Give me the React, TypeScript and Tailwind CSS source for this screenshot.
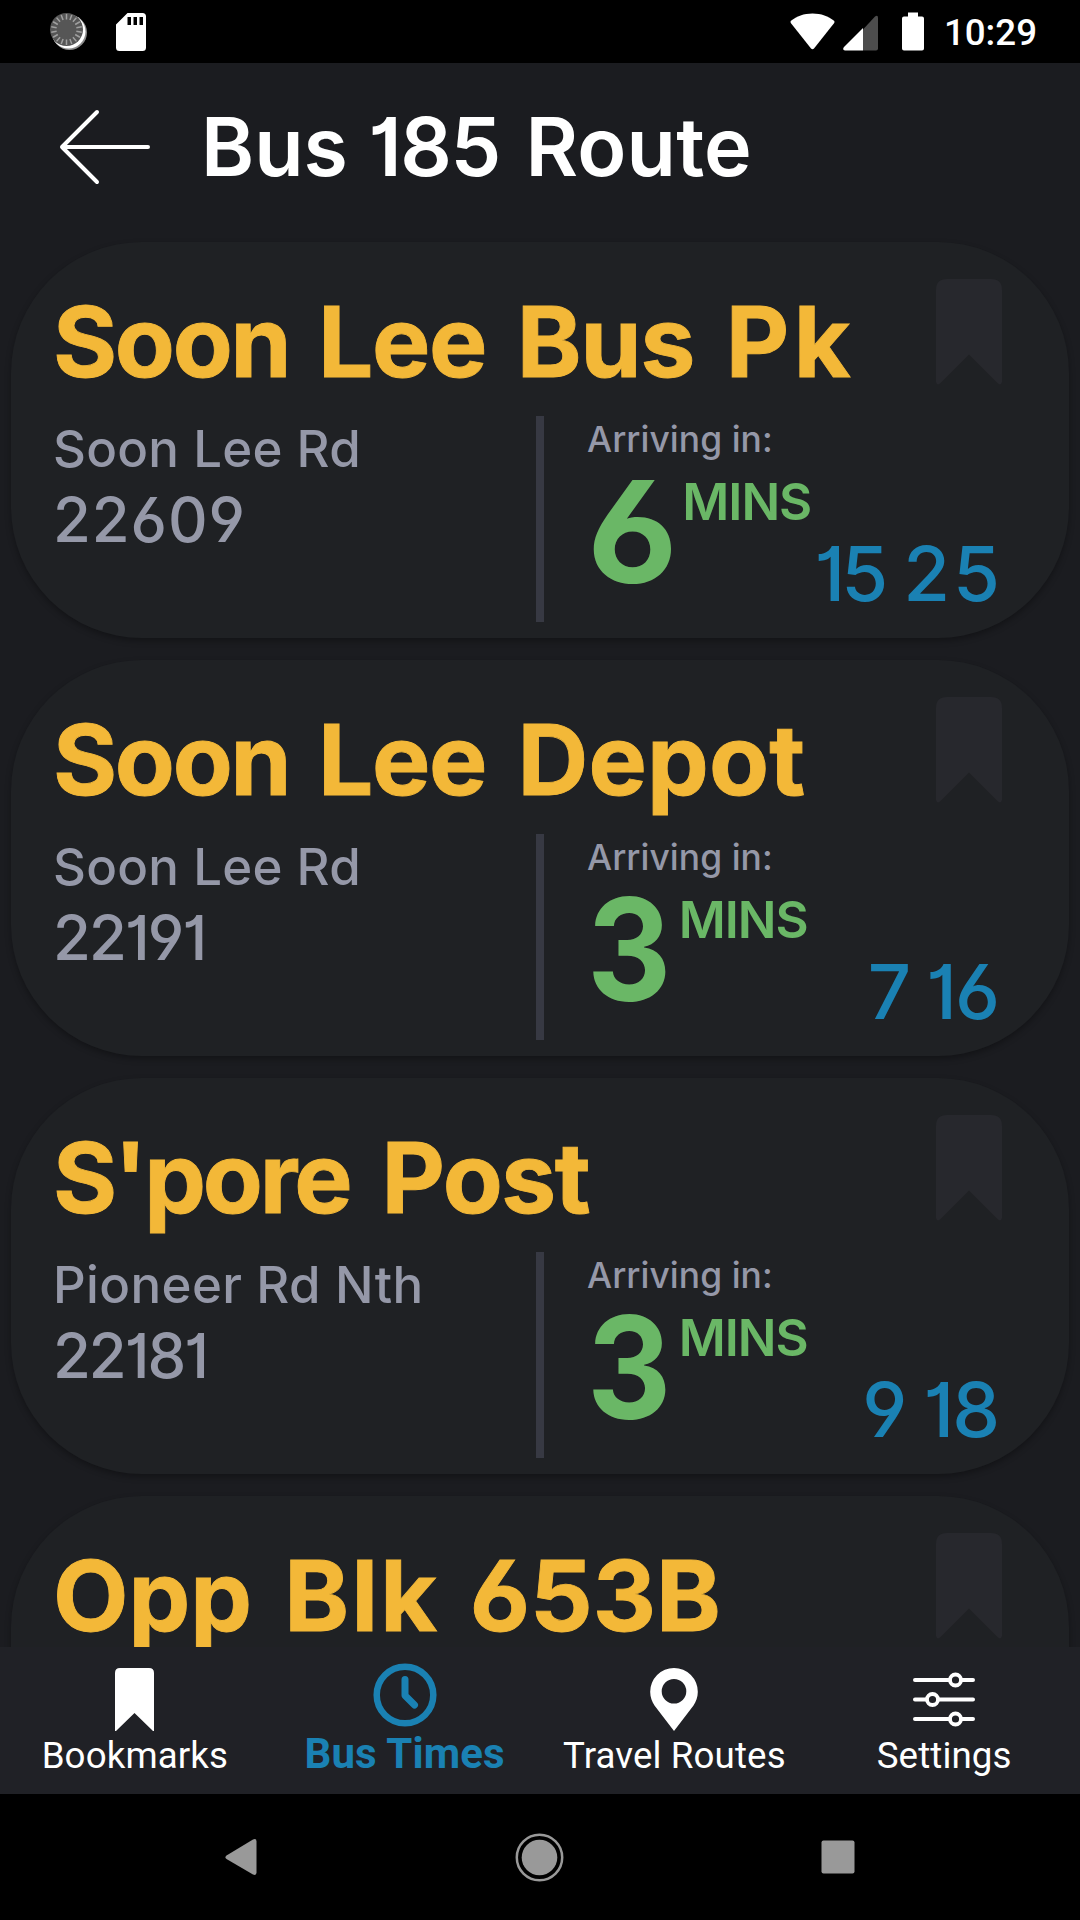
import type { ReactNode } from "react";

type Word = { text: string; className: string };

type Stop = {
  name: Word[];
  road: string;
  roadClass: string;
  code: string;
  codeClass: string;
  first: string;
  firstClass: string;
  laterClass: string;
  later: Word[];
};

const stops: Stop[] = [
  {
    name: [
      { text: "Soon", className: "tracking-[-2.3px]" },
      { text: "Lee", className: "ml-[7px] tracking-[-1.4px]" },
      { text: "Bus", className: "ml-[8.5px] tracking-[-1px]" },
      { text: "Pk", className: "ml-[3.5px] tracking-[4.5px]" },
    ],
    road: "Soon Lee Rd",
    roadClass: "tracking-[0.27px]",
    code: "22609",
    codeClass: "tracking-[0.9px]",
    first: "6",
    firstClass: "scale-x-[1.04]",
    laterClass: "gap-[19px]",
    later: [
      { text: "15", className: "tracking-[-4px]" },
      { text: "25", className: "-mr-[3px] tracking-[3px]" },
    ],
  },
  {
    name: [
      { text: "Soon", className: "tracking-[-2.3px]" },
      { text: "Lee", className: "ml-[7px] tracking-[-1.4px]" },
      { text: "Depot", className: "ml-[8px] tracking-[0.2px]" },
    ],
    road: "Soon Lee Rd",
    roadClass: "tracking-[0.27px]",
    code: "22191",
    codeClass: "tracking-[-2px]",
    first: "3",
    firstClass: "scale-x-[0.92] -mr-[8px]",
    laterClass: "gap-[15px]",
    later: [
      { text: "7", className: "" },
      { text: "16", className: "mr-[2px] tracking-[-2px]" },
    ],
  },
  {
    name: [
      { text: "S'pore", className: "tracking-[-3.1px]" },
      { text: "Post", className: "ml-[10px] tracking-[-1.4px]" },
    ],
    road: "Pioneer Rd Nth",
    roadClass: "tracking-[0.38px]",
    code: "22181",
    codeClass: "tracking-[-2.1px]",
    first: "3",
    firstClass: "scale-x-[0.92] -mr-[8px]",
    laterClass: "gap-[16px]",
    later: [
      { text: "9", className: "" },
      { text: "18", className: "mr-[2px] tracking-[-2px]" },
    ],
  },
  {
    name: [
      { text: "Opp", className: "" },
      { text: "Blk", className: "ml-[6.5px] tracking-[2.4px]" },
      { text: "653B", className: "ml-[7px]" },
    ],
    road: "",
    roadClass: "",
    code: "",
    codeClass: "",
    first: "",
    firstClass: "",
    laterClass: "",
    later: [],
  },
];

function StatusBar() {
  const ticks = Array.from({ length: 18 }, (_, i) => i * 20);
  return (
    <div className="flex h-[63px] shrink-0 items-center bg-black pl-[49px] pr-[42px] text-white">
      <svg width="40" height="40" viewBox="0 0 40 40">
        <circle cx="20.5" cy="20.5" r="17.5" fill="#8a8a8a" />
        <circle cx="19.5" cy="19.5" r="17" fill="#fff" />
        <circle cx="17.5" cy="17.5" r="16.5" fill="#565656" />
        {ticks.map((a) => (
          <path key={a} d="M17.5 2v5.500" stroke="#a0a0a0" strokeWidth="1.5" transform={`rotate(${a} 17.5 17.5)`} />
        ))}
      </svg>
      <svg className="ml-[26px]" width="32" height="40" viewBox="0 0 32 40">
        <path
          fillRule="evenodd"
          d="M12.500 1h15q3.500 0 3.500 3.500v31q0 3.500-3.500 3.500h-23q-3.500 0-3.500-3.500V12.500zM12.500 5v8h3.500v-8zM18.500 5v8h3.500v-8zM24.500 5v8h3.500v-8z"
          fill="#fff"
        />
      </svg>
      <div className="ml-auto flex items-center">
        <svg width="46" height="40" viewBox="0 0 46 40">
          <path d="M22.500 1.500c8.500 0 16 2.800 21.500 7.300q1 1 .2 2.200L24 36.500q-1.500 1.600-3 0L.8 11q-.8-1.200.2-2.200C6.500 4.300 14 1.500 22.500 1.500z" fill="#fff" />
        </svg>
        <svg className="ml-[7px]" width="36" height="40" viewBox="0 0 36 40">
          <path d="M20 17.500L32 4.500q3-2 3 1.500v30.500q0 2-2 2H20z" fill="#4d4d4d" />
          <path d="M20 16v22.500H2q-3-.5-1-3.500z" fill="#fff" />
        </svg>
        <svg className="ml-[22px]" width="24" height="40" viewBox="0 0 24 40">
          <path d="M7 .5h10v4h4q2 0 2 2v30q0 2-2 2H3q-2 0-2-2v-30q0-2 2-2h4z" fill="#fff" />
        </svg>
        <span className="ml-[19px] pt-[3px] pr-px font-[Roboto] text-[36.7px] leading-none font-medium">10:29</span>
      </div>
    </div>
  );
}

function StopCard({ stop }: { stop: Stop }) {
  return (
    <article className="h-[396px] shrink-0 rounded-[131px] bg-[#1f2124] shadow-[0_3px_6px_rgba(0,0,0,0.3)]">
      <div className="flex h-[174px] justify-between pr-[67px] pl-[42px]">
        <h2 className="pt-[25px] text-[98px] leading-[150px] font-bold whitespace-nowrap text-[#f3b838] [-webkit-text-stroke:0.9px_#f3b838]">
          {stop.name.map((w, i) => (
            <span key={w.text} className={w.className}>
              {i > 0 && " "}
              {w.text}
            </span>
          ))}
        </h2>
        <svg className="mt-[37px] shrink-0" width="66" height="106" viewBox="0 0 66 106">
          <path d="M11 0h44q11 0 11 11v92q-1 4-4 1.500L33 75.500 4 104.500q-3 2.500-4-1.500V11Q0 0 11 0z" fill="#27282d" />
        </svg>
      </div>
      {stop.code && (
        <div className="flex h-[206px]">
          <div className="w-[525px] pt-[2px] pl-[42px] font-medium text-[#9598a8]">
            <p className={`text-[51px] leading-[61px] ${stop.roadClass}`}>{stop.road}</p>
            <p className={`text-[61.5px] leading-[81px] ${stop.codeClass}`}>{stop.code}</p>
          </div>
          <div className="w-[8px] bg-[#373943]" />
          <div className="flex-1 pr-[69px] pl-[43px]">
            <p className="-mb-[2px] text-[35.4px] leading-[48px] font-medium tracking-[0.05px] text-[#9598a8]">Arriving in:</p>
            <div className="flex h-[139px] text-[#6ab766]">
              <span className={`origin-left text-[142px] leading-[139px] font-bold ${stop.firstClass}`}>{stop.first}</span>
              <span className="ml-[8px] text-[51px] leading-[79px] font-semibold tracking-[-1px]">MINS</span>
              <div className={`ml-auto flex self-end text-[76px] leading-[55px] font-medium text-[#1a81b3] ${stop.laterClass}`}>
                {stop.later.map((t) => (
                  <span key={t.text} className={t.className}>{t.text}</span>
                ))}
              </div>
            </div>
          </div>
        </div>
      )}
    </article>
  );
}

function Tab({ label, active, children }: { label: string; active?: boolean; children: ReactNode }) {
  return (
    <div className="flex w-1/4 flex-col items-center font-[Roboto] whitespace-nowrap">
      <div className={active ? "flex h-[84px] items-end pb-[4px]" : "flex h-[84px] items-end"}>{children}</div>
      {active ? (
        <span className="text-[42px] leading-[45px] font-bold tracking-[0.15px] text-[#1a81b3]">{label}</span>
      ) : (
        <span className="text-[36.7px] leading-[49px] tracking-[0.12px] text-white">{label}</span>
      )}
    </div>
  );
}

export default function App() {
  return (
    <div className="flex h-[1920px] w-[1080px] flex-col overflow-hidden bg-[#1b1c20] font-[Inter,sans-serif] [font-feature-settings:'cv01','cv03','cv04']">
      <StatusBar />
      <header className="flex h-[167px] shrink-0 items-center pl-[59px]">
        <svg width="92" height="78" viewBox="0 0 92 78">
          <path d="M38 4L3 39l35 35M3 39h86" fill="none" stroke="#fff" strokeWidth="4" strokeLinecap="round" strokeLinejoin="round" />
        </svg>
        <h1 className="ml-[50px] pt-[2px] text-[80.7px] leading-none font-semibold whitespace-nowrap text-white">
          Bus <span className="tracking-[-1.4px]">185</span>
          <span className="ml-[5px] tracking-[0.2px]"> Route</span>
        </h1>
      </header>
      <main className="flex h-[1417px] shrink-0 flex-col gap-[22px] overflow-hidden px-[11px] pt-[12px]">
        {stops.map((s) => (
          <StopCard key={s.name.map((w) => w.text).join(" ")} stop={s} />
        ))}
      </main>
      <nav className="flex h-[147px] shrink-0 bg-[#202126] pr-px">
        <Tab label="Bookmarks">
          <svg width="39" height="63" viewBox="0 0 39 63">
            <path d="M5 0h29q5 0 5 5v58h-1L19.500 45 1 63H0V5q0-5 5-5z" fill="#fff" />
          </svg>
        </Tab>
        <Tab label="Bus Times" active>
          <svg width="64" height="64" viewBox="0 0 64 64" fill="none" stroke="#1a81b3">
            <circle cx="32" cy="32" r="28.300" strokeWidth="6.500" />
            <path d="M32 16.500v16l9.500 9.500" strokeWidth="7" strokeLinecap="round" strokeLinejoin="round" />
          </svg>
        </Tab>
        <Tab label="Travel Routes">
          <svg width="48" height="63" viewBox="0 0 48 63">
            <path fillRule="evenodd" d="M24 0a23.800 23.800 0 0 1 23.800 24c0 5-1.800 9.500-4.300 13.500L24 63 4.500 37.500C2 33.500.2 29 .2 24A23.800 23.800 0 0 1 24 0zm0 11a12.300 12.300 0 1 0 0 24.600 12.300 12.300 0 0 0 0-24.600z" fill="#fff" />
          </svg>
        </Tab>
        <Tab label="Settings">
          <svg width="64" height="63" viewBox="0 0 64 63" stroke="#fff" strokeLinecap="round" fill="none" strokeWidth="4">
            <path d="M3 12h34M50 12h11M3 31.500h11M27 31.500h34M3 51h34M50 51h11" />
            <circle cx="43.500" cy="12" r="5.500" strokeWidth="3.800" />
            <circle cx="20.500" cy="31.500" r="5.500" strokeWidth="3.800" />
            <circle cx="43.500" cy="51" r="5.500" strokeWidth="3.800" />
          </svg>
        </Tab>
      </nav>
      <div className="flex h-[126px] shrink-0 items-center justify-center gap-[250px] bg-black pr-[2px]">
        <svg width="48" height="48" viewBox="0 0 48 48">
          <path d="M36 6.500q3.500-1.500 3.500 2v31q0 3.500-3.500 2L9.500 26q-2-1.800 0-3.500z" fill="#999" />
        </svg>
        <svg width="49" height="49" viewBox="0 0 49 49">
          <circle cx="24.500" cy="24.500" r="22.700" fill="none" stroke="#999" strokeWidth="2.500" />
          <circle cx="24.500" cy="24.500" r="17.800" fill="#999" />
        </svg>
        <svg width="48" height="48" viewBox="0 0 48 48">
          <rect x="7.500" y="7.500" width="33" height="33" rx="2" fill="#999" />
        </svg>
      </div>
    </div>
  );
}
